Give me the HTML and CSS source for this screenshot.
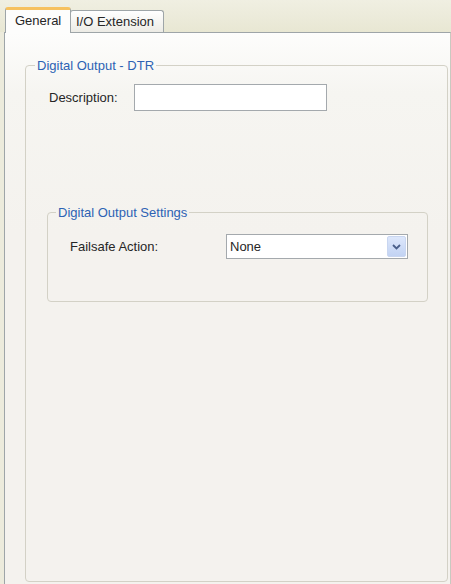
FILE: index.html
```html
<!DOCTYPE html>
<html>
<head>
<meta charset="utf-8">
<link rel="stylesheet" href="styles.css">
</head>
<body>
<div class="window">
  <div class="tabs">
    <div class="tab tab-active">General</div>
    <div class="tab">I/O Extension</div>
  </div>
  <div class="panel">
    <fieldset class="group group-outer">
      <legend class="legend legend-outer">Digital Output - DTR</legend>
      <div class="row row-desc">
        <label class="label label-desc">Description:</label>
        <div class="textbox"></div>
      </div>
      <fieldset class="group group-inner">
        <legend class="legend legend-inner">Digital Output Settings</legend>
        <div class="row">
          <label class="label label-fail">Failsafe Action:</label>
          <div class="combo">
            <span class="combo-text">None</span>
            <span class="combo-btn">
              <svg width="9" height="6" viewBox="0 0 9 6"><path d="M1 1 L4.5 4.5 L8 1" fill="none" stroke="#4a5f8a" stroke-width="1.8"/></svg>
            </span>
          </div>
        </div>
      </fieldset>
    </fieldset>
  </div>
</div>
</body>
</html>
```

FILE: styles.css
```css
html, body {
  margin: 0;
  padding: 0;
}
body {
  width: 451px;
  height: 584px;
  overflow: hidden;
  background: #ecebdc;
  font-family: "Liberation Sans", Arial, sans-serif;
  font-size: 13px;
  color: #262626;
}
.window {
  display: flex;
  flex-direction: column;
  height: 584px;
}
.tabs {
  display: flex;
  align-items: flex-end;
  height: 32px;
  padding-left: 5px;
  background: linear-gradient(#f0efe2, #e8e7d3);
}
.tab {
  box-sizing: border-box;
  height: 22px;
  padding: 0 6px;
  display: flex;
  align-items: center;
  border: 1px solid #9ea5a8;
  border-bottom: none;
  border-radius: 3px 3px 0 0;
  background: linear-gradient(#ffffff, #ecebe5);
  color: #262626;
  margin-left: -1px;
}
.tab-active {
  height: 26px;
  width: 66px;
  padding: 0 9px;
  margin-left: 0;
  margin-bottom: -1px;
  position: relative;
  z-index: 1;
  background: #fdfdfc;
  border-top: 3px solid #f6c15f;
  padding-bottom: 2px;
}
.tab:not(.tab-active) {
  width: 94px;
  padding-left: 5px;
}
.panel {
  flex: 1;
  margin-left: 4px;
  border: 1px solid #9ea5a8;
  border-right: 1px solid #c9c9c0;
  border-bottom: none;
  background: linear-gradient(#fdfdfc 0px, #f6f5f1 60px, #f4f2ee 200px, #f4f2ee);
  padding: 25px 2px 0 20px;
}
.group {
  margin: 0;
  border: 1px solid #d3d1c6;
  border-radius: 4px;
  min-width: 0;
}
.legend {
  color: #2d62b4;
  padding: 0 2px;
  line-height: 15px;
}
.legend-outer {
  margin-left: -12px;
}
.legend-inner {
  margin-left: -14px;
}
.group-outer {
  height: 524px;
  box-sizing: border-box;
  padding: 11px 19px 0 21px;
}
.row {
  display: flex;
  align-items: center;
}
.row-desc {
  padding-left: 2px;
}
.label-desc {
  width: 85px;
}
.textbox {
  box-sizing: border-box;
  width: 193px;
  height: 27px;
  background: #fff;
  border: 1px solid #a4a9ad;
}
.group-inner {
  margin-top: 94px;
  padding: 14px 0 42px 22px;
}
.label-fail {
  width: 156px;
}
.combo {
  box-sizing: border-box;
  width: 182px;
  height: 25px;
  background: #fff;
  border: 1px solid #a4a9ad;
  display: flex;
  align-items: stretch;
  padding: 1px;
}
.combo-text {
  flex: 1;
  display: flex;
  align-items: center;
  padding-left: 2px;
}
.combo-btn {
  width: 17px;
  display: flex;
  align-items: center;
  justify-content: center;
  background: linear-gradient(#dde7fb, #c2d3f3);
  border: 1px solid #c9d6f0;
  border-radius: 2px;
}
```
